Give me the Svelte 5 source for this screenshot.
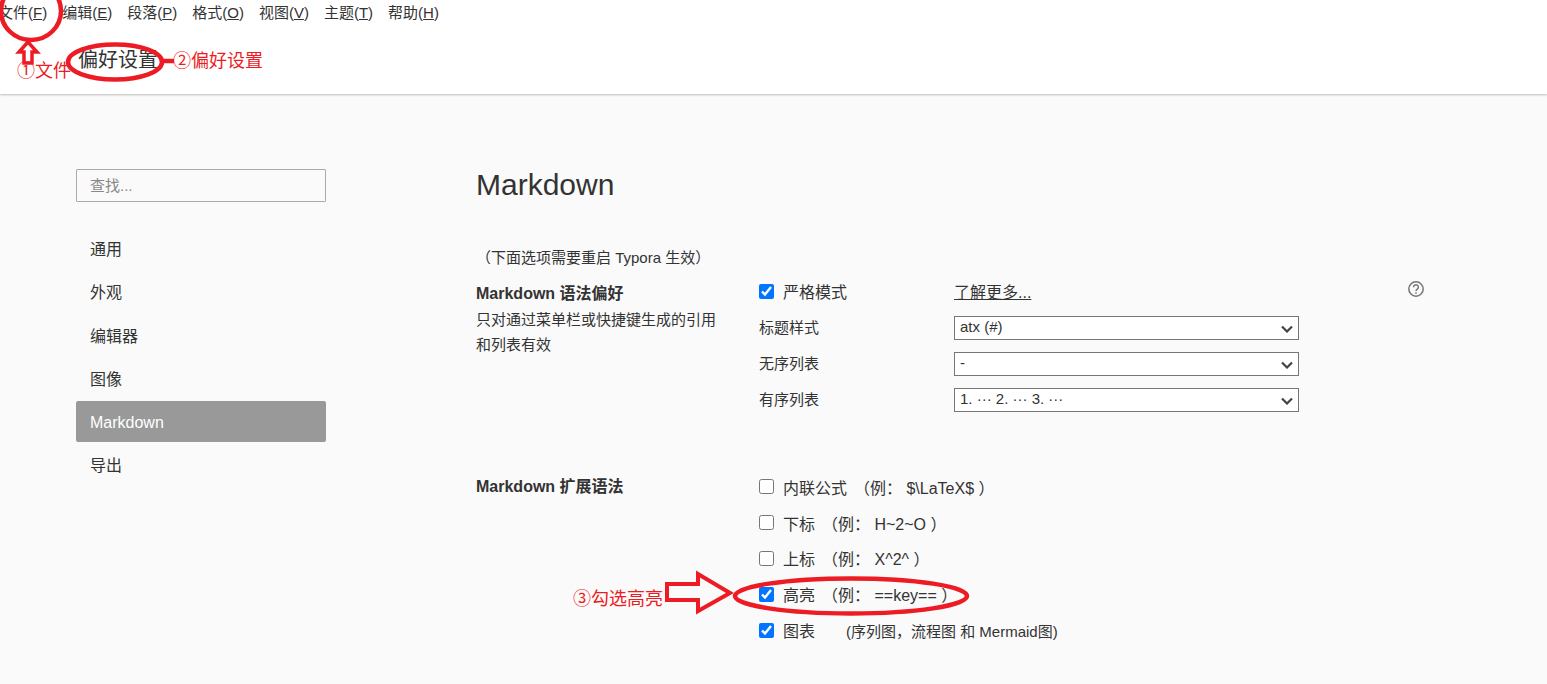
<script>
  const menus = [
    ['文件(', 'F'], ['编辑(', 'E'], ['段落(', 'P'], ['格式(', 'O'],
    ['视图(', 'V'], ['主题(', 'T'], ['帮助(', 'H']
  ];
  const navItems = ['通用', '外观', '编辑器', '图像', 'Markdown', '导出'];
  const selects = [
    { label: '标题样式', value: 'atx (#)' },
    { label: '无序列表', value: '-' },
    { label: '有序列表', value: '1. ··· 2. ··· 3. ···' }
  ];
  const extensions = [
    { name: '内联公式', hint: '（例： $\\LaTeX$ ）', checked: false },
    { name: '下标', hint: '（例： H~2~O ）', checked: false },
    { name: '上标', hint: '（例： X^2^ ）', checked: false },
    { name: '高亮', hint: '（例： ==key== ）', checked: true },
    { name: '图表', hint: '(序列图，流程图 和 Mermaid图)', checked: true, small: true }
  ];
</script>

<div class="page">
  <header class="top">
    <nav class="menu">
      {#each menus as [text, key]}
        <span>{text}<u>{key}</u>)</span>
      {/each}
    </nav>
    <div class="title">偏好设置</div>
  </header>

  <div class="body">
    <aside class="side">
      <input class="search" placeholder="查找..." />
      <ul class="nav">
        {#each navItems as item}
          <li class:active={item === 'Markdown'}>{item}</li>
        {/each}
      </ul>
    </aside>

    <main class="content">
      <h1>Markdown</h1>
      <p class="note">（下面选项需要重启 Typora 生效）</p>

      <section class="syntax">
        <div class="about">
          <h2>Markdown 语法偏好</h2>
          <p>只对通过菜单栏或快捷键生成的引用和列表有效</p>
        </div>
        <div class="options">
          <div class="strict">
            <label class="check"><input type="checkbox" checked /><span>严格模式</span></label>
            <a href="#more">了解更多...</a>
          </div>
          {#each selects as s}
            <div class="pick">
              <span>{s.label}</span>
              <div class="select">
                <select><option>{s.value}</option></select>
                <svg width="12" height="8" viewBox="0 0 12 8" fill="none" stroke="#444" stroke-width="2.2">
                  <path d="M1 1.5l5 5 5-5" />
                </svg>
              </div>
            </div>
          {/each}
        </div>
        <svg class="help" width="18" height="18" viewBox="0 0 18 18" fill="none" stroke="#757575">
          <circle cx="9" cy="9" r="7.2" stroke-width="1.5" />
          <path d="M6.6 7.2a2.4 2.3 0 1 1 3.7 1.9c-.9.6-1.3 1-1.3 2" stroke-width="1.5" />
          <path d="M9 12.2v1.6" stroke-width="1.5" />
        </svg>
      </section>

      <section class="extended">
        <h2>Markdown 扩展语法</h2>
        <div class="rows">
          {#each extensions as e}
            <label class="check">
              <input type="checkbox" checked={e.checked} />
              <span>{e.name}</span>
              <span class="hint" class:small={e.small}>{e.hint}</span>
            </label>
          {/each}
        </div>
      </section>
    </main>
  </div>

  <!-- hand-drawn red annotations on top of the screenshot -->
  <svg class="marks" width="1547" height="684" viewBox="0 0 1547 684" fill="none" stroke="#ed1c24" stroke-width="4.5">
    <ellipse cx="31" cy="11" rx="30" ry="29" />
    <path d="M28 42 19 52h5v11h8V52h5z" fill="#fff" stroke-width="3.5" />
    <ellipse cx="115" cy="62" rx="47" ry="17.5" />
    <path d="M162 61h12" />
    <ellipse cx="851" cy="596" rx="116" ry="17.5" />
    <path d="M667 584h31v-10l32 19-32 18v-11h-31z" stroke-width="4" />
  </svg>
  <span class="note-red one">①文件</span>
  <span class="note-red two">②偏好设置</span>
  <span class="note-red three">③勾选高亮</span>
</div>

<style>
  :global(body) {
    margin: 0;
    background: #fafafa;
  }

  .page {
    position: relative;
    height: 684px;
    overflow: hidden;
    font-family: "Liberation Sans", "Noto Sans CJK SC", sans-serif;
    font-size: 15px;
    color: #333;
  }

  .top {
    height: 94px;
    background: #fff;
    box-shadow: 0 1px 2px rgba(0, 0, 0, 0.25);
    box-sizing: border-box;
  }

  .menu {
    display: flex;
    gap: 15px;
    height: 22px;
    margin-left: -2px;
    align-items: center;
  }

  .title {
    margin: 24px 0 0 78px;
    font-size: 20px;
    line-height: 28px;
  }

  .body {
    display: flex;
  }

  .side {
    width: 250px;
    margin: 75px 150px 0 76px;
  }

  .search {
    display: block;
    box-sizing: border-box;
    width: 250px;
    height: 33px;
    padding: 0 13px;
    border: 1px solid #aaa;
    border-radius: 1px;
    background: transparent;
    font: inherit;
    outline: none;
  }

  .search::placeholder {
    color: #888;
  }

  .nav {
    list-style: none;
    margin: 26px 0 0;
    padding: 0;
  }

  .nav li {
    height: 41px;
    line-height: 44px;
    margin-bottom: 2.3px;
    padding-left: 14px;
    font-size: 16px;
    border-radius: 2px;
  }

  .nav li.active {
    background: #999;
    color: #fff;
  }

  .content {
    flex: 1;
    padding-top: 70px;
  }

  h1 {
    margin: 0;
    font-size: 30px;
    font-weight: 400;
    line-height: 42px;
  }

  .note {
    margin: 42px 0 0;
    line-height: 20px;
  }

  h2 {
    margin: 0;
    font-size: 16px;
    font-weight: 700;
    line-height: 22px;
  }

  .syntax {
    position: relative;
    display: flex;
    margin-top: 15px;
    height: 186px;
  }

  .about {
    width: 283px;
  }

  .about p {
    width: 245px;
    margin: 2px 0 0;
    line-height: 25px;
  }

  .options {
    width: 540px;
    margin-top: -4px;
  }

  .strict {
    display: flex;
    height: 25px;
    align-items: center;
  }

  .strict .check {
    width: 195px;
    height: 24px;
  }

  .strict .check span {
    margin-bottom: 2px;
  }

  .strict a {
    color: #333;
    font-size: 16px;
    margin-bottom: 2px;
  }

  .pick {
    display: flex;
    align-items: center;
    height: 24px;
    margin-top: 12px;
  }

  .pick > span {
    width: 195px;
    margin-bottom: 4px;
  }

  .select {
    position: relative;
    width: 345px;
    height: 24px;
  }

  .select select {
    display: block;
    box-sizing: border-box;
    width: 100%;
    height: 24px;
    padding: 0 5px 3px;
    border: 1px solid #767676;
    border-radius: 0;
    background: #fff;
    color: #333;
    font: inherit;
    appearance: none;
  }

  .select svg {
    position: absolute;
    right: 6px;
    top: 9px;
    pointer-events: none;
  }

  .help {
    position: absolute;
    left: 931px;
    top: -3px;
  }

  .extended {
    display: flex;
  }

  .extended h2 {
    width: 283px;
    padding-top: 7px;
  }

  .rows {
    display: grid;
    grid-auto-rows: 35.8px;
  }

  .check {
    display: flex;
    align-items: center;
    font-size: 16px;
  }

  .check input {
    width: 15px;
    height: 15px;
    margin: 0 9px 0 0;
    accent-color: #0075ff;
  }

  .hint {
    margin-left: 7px;
    white-space: pre;
  }

  .hint.small {
    margin-left: 31px;
    font-size: 15px;
  }

  .marks {
    position: absolute;
    left: 0;
    top: 0;
    pointer-events: none;
  }

  .note-red {
    position: absolute;
    color: #ed1c24;
    font-size: 18px;
    line-height: 24px;
    white-space: nowrap;
  }

  .one { left: 17px; top: 59px; }
  .two { left: 173px; top: 49px; }
  .three { left: 573px; top: 587px; }
</style>
